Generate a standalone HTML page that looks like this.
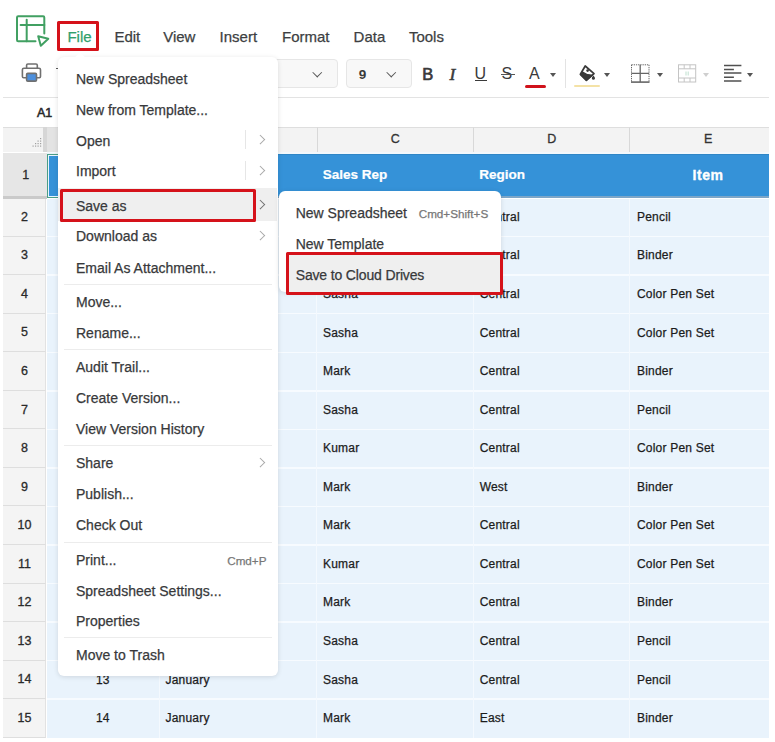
<!DOCTYPE html>
<html><head><meta charset="utf-8">
<style>
html,body{margin:0;padding:0;background:#fff;}
body{width:775px;height:742px;position:relative;overflow:hidden;font-family:"Liberation Sans",sans-serif;color:#333;}
.abs{position:absolute;}
.mb,.mi,.ct,.sc{-webkit-text-stroke:0.25px currentColor;}
/* top menubar */
.mb{position:absolute;top:28px;font-size:15px;line-height:18px;color:#3d3f42;white-space:nowrap;}
.redbox{position:absolute;border:3px solid #d5121a;border-radius:1.5px;box-sizing:border-box;}
/* toolbar */
.tbline{position:absolute;left:3px;width:766px;top:96.5px;height:1px;background:#e3e3e3;}
.dd{position:absolute;top:59px;height:29px;box-sizing:border-box;border:1px solid #e6e6e6;border-radius:4px;background:#f8f8f8;}
.chev{position:absolute;width:5.5px;height:5.5px;border-right:1.3px solid #555;border-bottom:1.3px solid #555;transform:rotate(45deg);}
.tri{position:absolute;width:0;height:0;border-left:4px solid transparent;border-right:4px solid transparent;border-top:4px solid #666;}
/* grid */
.rh{position:absolute;left:3px;width:42.5px;box-sizing:border-box;background:#f4f4f4;border-bottom:1px solid #dedede;border-right:1px solid #e2e2e2;font-size:12.5px;color:#2a2a2a;-webkit-text-stroke:0.3px #2a2a2a;}
.rh span{position:absolute;left:1.5px;right:0;top:50%;margin-top:-7px;line-height:14px;text-align:center;}
.rh.sel{background:#e6e6e6;width:44px;border-right:none;border-bottom:3px solid #cacaca;}
.ch{position:absolute;top:127.2px;height:25px;box-sizing:border-box;background:#f3f3f3;border-left:1px solid #d8d8d8;border-top:1px solid #dedede;font-size:12.5px;color:#333;-webkit-text-stroke:0.3px #333;}
.ch span{position:absolute;left:0;right:0;top:4.3px;line-height:14px;text-align:center;}
.corner{position:absolute;left:3px;top:127.2px;width:40.3px;height:25px;background:#f3f3f3;border-top:1px solid #dedede;box-sizing:border-box;}
.cstrip{position:absolute;left:43.3px;top:127.2px;width:3.7px;height:25px;background:#d6d6d6;}
.blue{position:absolute;left:46.5px;width:722.5px;background:#3592d8;}
.bt{position:absolute;line-height:44px;font-size:13.5px;font-weight:bold;color:#fff;white-space:nowrap;-webkit-text-stroke:0.2px #fff;}
.data{position:absolute;left:46.5px;width:722.5px;background:#e9f3fc;}
.hl{position:absolute;left:46.5px;width:722.5px;height:1.5px;background:#f7fbff;margin-top:-0.75px;}
.vl{position:absolute;top:198.5px;height:539.3px;width:1.2px;background:#f4f9fe;}
.ct{position:absolute;line-height:14px;font-size:12px;letter-spacing:0.2px;color:#1c1c1c;white-space:nowrap;}
.a1sel{position:absolute;left:47px;top:154px;width:113px;height:44px;box-sizing:border-box;border:1.6px solid #4b9e86;box-shadow:inset 0 0 0 1px #e8f6ff;}
/* menu */
.menu{position:absolute;left:58px;top:57px;width:219.8px;height:619.3px;background:#fff;border-radius:6px;box-shadow:0 1px 5px rgba(0,0,0,0.12);}
.mi{position:absolute;left:18px;font-size:14px;line-height:17px;color:#38393b;white-space:nowrap;}
.hsep{position:absolute;left:6px;width:208px;height:1px;background:#ececec;}
.vsep{position:absolute;left:187px;width:1px;height:19px;background:#e6e6e6;}
.arr{position:absolute;left:199px;width:5.6px;height:5.6px;border-right:1.6px solid #a8a8a8;border-top:1.6px solid #a8a8a8;transform:rotate(45deg);}
.arr.dk{border-color:#707070;}
.sc{position:absolute;font-size:11.7px;line-height:14px;color:#777;white-space:nowrap;}
.sub{position:absolute;left:279.3px;top:190.6px;width:221.3px;height:101px;background:#fff;border-radius:6px;box-shadow:0 1px 5px rgba(0,0,0,0.12);}
</style></head><body>

<!-- logo -->
<svg class="abs" style="left:0;top:0" width="60" height="60" viewBox="0 0 60 60">
 <g fill="none" stroke="#41a062" stroke-width="2" stroke-linecap="round" stroke-linejoin="round">
  <path d="M44.3 33.5 V17.5 Q44.3 16.3 43.1 16.3 H18.2 Q17 16.3 17 17.5 V40 Q17 41.2 18.2 41.2 H35.5"/>
  <path d="M20.6 25 H44.3"/>
  <path d="M26.7 19.8 V41.2"/>
  <path d="M38.2 36.3 L48.3 38.8 L40.8 45.8 Z"/>
 </g>
</svg>

<div class="mb" style="left:67.4px;color:#30a06c;">File</div>
<div class="redbox" style="left:57.2px;top:20.8px;width:41.6px;height:30.5px;"></div>
<div class="mb" style="left:114.4px">Edit</div>
<div class="mb" style="left:163.2px">View</div>
<div class="mb" style="left:219.6px">Insert</div>
<div class="mb" style="left:282px">Format</div>
<div class="mb" style="left:353.6px">Data</div>
<div class="mb" style="left:408.9px">Tools</div>

<!-- toolbar -->
<svg class="abs" style="left:20px;top:62px" width="24" height="22" viewBox="0 0 24 22">
 <g fill="none" stroke="#707070" stroke-width="1.6" stroke-linejoin="round">
  <path d="M6.6 6.3 V3.3 Q6.6 2 7.9 2 H16 Q17.3 2 17.3 3.3 V6.3"/>
  <path d="M6 15.7 H3.6 Q2.4 15.7 2.4 14.5 V7.8 Q2.4 6.3 3.9 6.3 H19 Q20.5 6.3 20.5 7.8 V14.5 Q20.5 15.7 19.3 15.7 H16.8"/>
  <rect x="6.6" y="11.4" width="9.9" height="7.7" rx="1.2" fill="#4d8fdc"/>
 </g>
</svg>
<div class="abs" style="left:56.3px;top:67.6px;width:1.6px;height:1.6px;border-radius:1px;background:#444"></div>
<div class="dd" style="left:250px;width:87.7px"></div>
<div class="chev" style="left:314px;top:69px"></div>
<div class="dd" style="left:346.4px;width:65.3px"></div>
<div class="abs" style="left:358.8px;top:67px;font-size:13.5px;font-weight:bold;line-height:16px;color:#3a3a3a">9</div>
<div class="chev" style="left:388px;top:69px"></div>

<div class="abs" style="left:422.3px;top:65px;font-size:16.5px;line-height:18px;color:#3a3a3a;-webkit-text-stroke:0.7px #3a3a3a">B</div>
<div class="abs" style="left:449.5px;top:64.5px;font-size:17.5px;font-style:italic;font-family:'Liberation Serif',serif;line-height:18px;color:#3a3a3a;-webkit-text-stroke:0.5px #3a3a3a">I</div>
<div class="abs" style="left:474.5px;top:65px;font-size:16px;line-height:18px;color:#3a3a3a">U</div>
<div class="abs" style="left:474.5px;top:79.5px;width:12px;height:1.6px;background:#3a3a3a"></div>
<div class="abs" style="left:501.5px;top:65px;font-size:16px;line-height:18px;color:#3a3a3a">S</div>
<div class="abs" style="left:501px;top:73.6px;width:14px;height:1px;background:#555"></div>
<div class="abs" style="left:529px;top:65px;font-size:16px;line-height:18px;color:#3a3a3a">A</div>
<div class="abs" style="left:524.6px;top:84.5px;width:21.3px;height:3px;border-radius:1.5px;background:#d0121b"></div>
<div class="tri" style="left:550px;top:72.5px;border-left-width:3.8px;border-right-width:3.8px;border-top:4.2px solid #555"></div>
<div class="abs" style="left:564.6px;top:59px;width:1px;height:28.6px;background:#e3e3e3"></div>
<!-- paint bucket -->
<svg class="abs" style="left:576px;top:62px" width="24" height="20" viewBox="0 0 24 20">
 <path d="M9.2 4 L18 11.6 L10.4 18.4 L4.4 12.3 Z" fill="#fff" stroke="#3a3a3a" stroke-width="1.7" stroke-linejoin="round"/>
 <path d="M4.4 12.3 L6.5 10 Q11 13.5 16.5 13 L10.4 18.4 Z" fill="#3a3a3a" stroke="#3a3a3a" stroke-width="1.2" stroke-linejoin="round"/>
 <circle cx="11.6" cy="8.6" r="1.3" fill="#3a3a3a"/>
 <path d="M17.4 13.5 Q19.3 15.5 19 16.6 Q18.7 17.8 17.4 17.8 Q16.1 17.8 15.8 16.6 Q15.5 15.5 17.4 13.5Z" fill="#3a3a3a"/>
</svg>
<div class="abs" style="left:574px;top:84.7px;width:25.6px;height:2.3px;border-radius:1.2px;background:#f4e2a6"></div>
<div class="tri" style="left:604px;top:72.5px;border-left-width:3.8px;border-right-width:3.8px;border-top:4.2px solid #555"></div>
<!-- borders -->
<svg class="abs" style="left:630px;top:63px" width="21" height="21" viewBox="0 0 21 21">
 <g stroke="#666" fill="none">
  <path d="M1.5 1.8 H19 M1.5 1.8 V19 M19 1.8 V19" stroke-width="1" stroke-dasharray="1.3 0.9"/>
  <path d="M10.2 1.8 V19 M1.5 10.4 H19" stroke-width="1.3"/>
  <path d="M1 19.1 H19.5" stroke-width="1.6"/>
 </g>
</svg>
<div class="tri" style="left:657px;top:72.5px;border-left-width:3.8px;border-right-width:3.8px;border-top:4.2px solid #555"></div>
<!-- merge -->
<svg class="abs" style="left:676.5px;top:63px" width="21" height="21" viewBox="0 0 21 21">
 <g stroke="#c4c4c4" fill="none" stroke-width="1">
  <rect x="1.5" y="1.8" width="17.2" height="17.2"/>
  <path d="M1.5 5.8 H18.7 M1.5 15 H18.7 M7.2 1.8 V5.8 M13 1.8 V5.8 M7.2 15 V19 M13 15 V19"/>
 </g>
 <path d="M9 8.5 V12.5 M11.2 8.5 V12.5" stroke="#bfe0cf" stroke-width="1"/>
</svg>
<div class="tri" style="left:703px;top:72.5px;border-left-width:3.4px;border-right-width:3.4px;border-top:4px solid #cfcfcf"></div>
<!-- align -->
<svg class="abs" style="left:722px;top:63px" width="22" height="21" viewBox="0 0 22 21">
 <path d="M2 2.5 H19.4 M2 6.6 H11.9 M2 10.1 H19.4 M2 14.2 H11.9 M2 18 H19.4" stroke="#505050" stroke-width="1.5"/>
</svg>
<div class="tri" style="left:747px;top:72.8px;border-left-width:3.6px;border-right-width:3.6px;border-top:4.2px solid #555"></div>
<div class="tbline"></div>

<!-- name box -->
<div class="abs" style="left:37px;top:105.5px;font-size:12.5px;line-height:14px;color:#2a2a2a;-webkit-text-stroke:0.55px #2a2a2a">A1</div>


<!-- grid -->
<div class="corner"></div>
<svg class="abs" style="left:30px;top:137px" width="12" height="12" viewBox="0 0 12 12">
 <g fill="#a0a0a0">
  <rect x="10" y="1" width="1.2" height="1.2"/>
  <rect x="7.5" y="3.5" width="1.2" height="1.2"/><rect x="10" y="3.5" width="1.2" height="1.2"/>
  <rect x="5" y="6" width="1.2" height="1.2"/><rect x="7.5" y="6" width="1.2" height="1.2"/><rect x="10" y="6" width="1.2" height="1.2"/>
  <rect x="2.5" y="8.5" width="1.2" height="1.2"/><rect x="5" y="8.5" width="1.2" height="1.2"/><rect x="7.5" y="8.5" width="1.2" height="1.2"/><rect x="10" y="8.5" width="1.2" height="1.2"/>
 </g>
</svg>
<div class="cstrip"></div>
<div class="rh sel" style="top:153.00px;height:45.50px"><span style="margin-top:-6.5px">1</span></div>
<div class="rh" style="top:198.50px;height:38.10px"><span>2</span></div>
<div class="rh" style="top:236.60px;height:38.55px"><span>3</span></div>
<div class="rh" style="top:275.15px;height:38.55px"><span>4</span></div>
<div class="rh" style="top:313.70px;height:38.55px"><span>5</span></div>
<div class="rh" style="top:352.25px;height:38.55px"><span>6</span></div>
<div class="rh" style="top:390.80px;height:38.55px"><span>7</span></div>
<div class="rh" style="top:429.35px;height:38.55px"><span>8</span></div>
<div class="rh" style="top:467.90px;height:38.55px"><span>9</span></div>
<div class="rh" style="top:506.45px;height:38.55px"><span>10</span></div>
<div class="rh" style="top:545.00px;height:38.55px"><span>11</span></div>
<div class="rh" style="top:583.55px;height:38.55px"><span>12</span></div>
<div class="rh" style="top:622.10px;height:38.55px"><span>13</span></div>
<div class="rh" style="top:660.65px;height:38.55px"><span>14</span></div>
<div class="rh" style="top:699.20px;height:38.55px"><span>15</span></div>
<div class="ch" style="left:46.50px;width:112.50px;background:#e3e3e3;border-left:none"><span>A</span></div>
<div class="ch" style="left:159.00px;width:157.50px"><span>B</span></div>
<div class="ch" style="left:316.50px;width:156.50px"><span>C</span></div>
<div class="ch" style="left:473.00px;width:156.40px"><span>D</span></div>
<div class="ch" style="left:629.40px;width:156.50px"><span>E</span></div>
<div class="abs" style="left:46.5px;width:722.5px;top:152.2px;height:1.6px;background:#f2f8fc"></div>
<div class="blue" style="top:153.8px;height:42.7px;border-top:0.8px solid #2f86c6;box-sizing:border-box"></div>
<div class="abs" style="left:46.5px;width:722.5px;top:196.2px;height:2.3px;background:#7da6c8"></div>
<div class="bt" style="left:165.30px;top:153.0px;height:44.0px">Month</div>
<div class="bt" style="left:322.80px;top:153.0px;height:44.0px">Sales Rep</div>
<div class="bt" style="left:479.30px;top:153.0px;height:44.0px">Region</div>
<div class="bt" style="left:692.4px;top:153.0px;height:44.0px;letter-spacing:0.6px;font-size:14px;-webkit-text-stroke:0.35px #fff">Item</div>
<div class="data" style="top:198.5px;height:539.25px"></div>
<div class="hl" style="top:236.60px"></div>
<div class="hl" style="top:275.15px"></div>
<div class="hl" style="top:313.70px"></div>
<div class="hl" style="top:352.25px"></div>
<div class="hl" style="top:390.80px"></div>
<div class="hl" style="top:429.35px"></div>
<div class="hl" style="top:467.90px"></div>
<div class="hl" style="top:506.45px"></div>
<div class="hl" style="top:545.00px"></div>
<div class="hl" style="top:583.55px"></div>
<div class="hl" style="top:622.10px"></div>
<div class="hl" style="top:660.65px"></div>
<div class="hl" style="top:699.20px"></div>
<div class="vl" style="left:158.50px"></div>
<div class="vl" style="left:316.00px"></div>
<div class="vl" style="left:472.50px"></div>
<div class="vl" style="left:628.90px"></div>
<div class="ct" style="left:46.50px;width:112.5px;text-align:center;top:209.94px">1</div>
<div class="ct" style="left:165.50px;top:209.94px">January</div>
<div class="ct" style="left:323.00px;top:209.94px">Sasha</div>
<div class="ct" style="left:479.70px;top:209.94px">Central</div>
<div class="ct" style="left:637.00px;top:209.94px">Pencil</div>
<div class="ct" style="left:46.50px;width:112.5px;text-align:center;top:248.49px">2</div>
<div class="ct" style="left:165.50px;top:248.49px">January</div>
<div class="ct" style="left:323.00px;top:248.49px">Mark</div>
<div class="ct" style="left:479.70px;top:248.49px">Central</div>
<div class="ct" style="left:637.00px;top:248.49px">Binder</div>
<div class="ct" style="left:46.50px;width:112.5px;text-align:center;top:287.04px">3</div>
<div class="ct" style="left:165.50px;top:287.04px">January</div>
<div class="ct" style="left:323.00px;top:287.04px">Sasha</div>
<div class="ct" style="left:479.70px;top:287.04px">Central</div>
<div class="ct" style="left:637.00px;top:287.04px">Color Pen Set</div>
<div class="ct" style="left:46.50px;width:112.5px;text-align:center;top:325.59px">4</div>
<div class="ct" style="left:165.50px;top:325.59px">January</div>
<div class="ct" style="left:323.00px;top:325.59px">Sasha</div>
<div class="ct" style="left:479.70px;top:325.59px">Central</div>
<div class="ct" style="left:637.00px;top:325.59px">Color Pen Set</div>
<div class="ct" style="left:46.50px;width:112.5px;text-align:center;top:364.14px">5</div>
<div class="ct" style="left:165.50px;top:364.14px">January</div>
<div class="ct" style="left:323.00px;top:364.14px">Mark</div>
<div class="ct" style="left:479.70px;top:364.14px">Central</div>
<div class="ct" style="left:637.00px;top:364.14px">Binder</div>
<div class="ct" style="left:46.50px;width:112.5px;text-align:center;top:402.69px">6</div>
<div class="ct" style="left:165.50px;top:402.69px">January</div>
<div class="ct" style="left:323.00px;top:402.69px">Sasha</div>
<div class="ct" style="left:479.70px;top:402.69px">Central</div>
<div class="ct" style="left:637.00px;top:402.69px">Pencil</div>
<div class="ct" style="left:46.50px;width:112.5px;text-align:center;top:441.24px">7</div>
<div class="ct" style="left:165.50px;top:441.24px">January</div>
<div class="ct" style="left:323.00px;top:441.24px">Kumar</div>
<div class="ct" style="left:479.70px;top:441.24px">Central</div>
<div class="ct" style="left:637.00px;top:441.24px">Color Pen Set</div>
<div class="ct" style="left:46.50px;width:112.5px;text-align:center;top:479.79px">8</div>
<div class="ct" style="left:165.50px;top:479.79px">January</div>
<div class="ct" style="left:323.00px;top:479.79px">Mark</div>
<div class="ct" style="left:479.70px;top:479.79px">West</div>
<div class="ct" style="left:637.00px;top:479.79px">Binder</div>
<div class="ct" style="left:46.50px;width:112.5px;text-align:center;top:518.34px">9</div>
<div class="ct" style="left:165.50px;top:518.34px">January</div>
<div class="ct" style="left:323.00px;top:518.34px">Mark</div>
<div class="ct" style="left:479.70px;top:518.34px">Central</div>
<div class="ct" style="left:637.00px;top:518.34px">Color Pen Set</div>
<div class="ct" style="left:46.50px;width:112.5px;text-align:center;top:556.89px">10</div>
<div class="ct" style="left:165.50px;top:556.89px">January</div>
<div class="ct" style="left:323.00px;top:556.89px">Kumar</div>
<div class="ct" style="left:479.70px;top:556.89px">Central</div>
<div class="ct" style="left:637.00px;top:556.89px">Color Pen Set</div>
<div class="ct" style="left:46.50px;width:112.5px;text-align:center;top:595.44px">11</div>
<div class="ct" style="left:165.50px;top:595.44px">January</div>
<div class="ct" style="left:323.00px;top:595.44px">Mark</div>
<div class="ct" style="left:479.70px;top:595.44px">Central</div>
<div class="ct" style="left:637.00px;top:595.44px">Binder</div>
<div class="ct" style="left:46.50px;width:112.5px;text-align:center;top:633.99px">12</div>
<div class="ct" style="left:165.50px;top:633.99px">January</div>
<div class="ct" style="left:323.00px;top:633.99px">Sasha</div>
<div class="ct" style="left:479.70px;top:633.99px">Central</div>
<div class="ct" style="left:637.00px;top:633.99px">Pencil</div>
<div class="ct" style="left:46.50px;width:112.5px;text-align:center;top:672.54px">13</div>
<div class="ct" style="left:165.50px;top:672.54px">January</div>
<div class="ct" style="left:323.00px;top:672.54px">Sasha</div>
<div class="ct" style="left:479.70px;top:672.54px">Central</div>
<div class="ct" style="left:637.00px;top:672.54px">Pencil</div>
<div class="ct" style="left:46.50px;width:112.5px;text-align:center;top:711.09px">14</div>
<div class="ct" style="left:165.50px;top:711.09px">January</div>
<div class="ct" style="left:323.00px;top:711.09px">Mark</div>
<div class="ct" style="left:479.70px;top:711.09px">East</div>
<div class="ct" style="left:637.00px;top:711.09px">Binder</div>
<div class="abs" style="left:46.5px;top:153px;width:114px;height:1px;background:#e9f2f8"></div>
<div class="a1sel"></div>
<div class="abs" style="left:769px;top:120px;width:6px;height:622px;background:#fff"></div>

<!-- menu -->
<div class="menu">
<svg class="abs" style="left:15px;top:-4.5px" width="14" height="6" viewBox="0 0 14 6"><path d="M0 6 L6.3 0.3 Q7 -0.2 7.7 0.3 L14 6 Z" fill="#fff"/></svg>
<div class="abs" style="left:0;top:131px;width:219px;height:32.5px;background:#efefef"></div>
<div class="mi" style="top:14.00px">New Spreadsheet</div>
<div class="mi" style="top:44.70px">New from Template...</div>
<div class="mi" style="top:75.50px">Open</div>
<div class="vsep" style="top:73.00px"></div>
<div class="arr" style="top:79.00px"></div>
<div class="mi" style="top:106.10px">Import</div>
<div class="vsep" style="top:103.60px"></div>
<div class="arr" style="top:109.60px"></div>
<div class="mi" style="top:140.60px">Save as</div>
<div class="arr dk" style="top:144.10px"></div>
<div class="mi" style="top:171.40px">Download as</div>
<div class="arr" style="top:174.90px"></div>
<div class="mi" style="top:202.60px">Email As Attachment...</div>
<div class="mi" style="top:237.00px">Move...</div>
<div class="mi" style="top:268.00px">Rename...</div>
<div class="mi" style="top:302.10px">Audit Trail...</div>
<div class="mi" style="top:333.00px">Create Version...</div>
<div class="mi" style="top:363.50px">View Version History</div>
<div class="mi" style="top:398.20px">Share</div>
<div class="arr" style="top:401.70px"></div>
<div class="mi" style="top:429.30px">Publish...</div>
<div class="mi" style="top:459.60px">Check Out</div>
<div class="mi" style="top:494.60px">Print...</div>
<div class="sc" style="right:11.3px;top:496.60px">Cmd+P</div>
<div class="mi" style="top:525.50px">Spreadsheet Settings...</div>
<div class="mi" style="top:556.00px">Properties</div>
<div class="mi" style="top:590.20px">Move to Trash</div>
<div class="hsep" style="top:227.00px"></div>
<div class="hsep" style="top:292.00px"></div>
<div class="hsep" style="top:388.40px"></div>
<div class="hsep" style="top:484.80px"></div>
<div class="hsep" style="top:580.30px"></div>
</div>
<div class="redbox" style="left:60.3px;top:189.3px;width:196px;height:32.3px;"></div>

<!-- submenu -->
<div class="sub">
 <div class="abs" style="left:7px;top:62px;width:214px;height:39px;background:#efefef;"></div>
 <div class="mi" style="left:16.4px;top:14px">New Spreadsheet</div>
 <div class="sc" style="left:139.4px;top:16.8px">Cmd+Shift+S</div>
 <div class="mi" style="left:16.4px;top:45.6px">New Template</div>
 <div class="mi" style="left:16.4px;top:76.3px;letter-spacing:-0.15px">Save to Cloud Drives</div>
</div>
<div class="redbox" style="left:286px;top:252.2px;width:216.8px;height:42.6px;"></div>

</body></html>
